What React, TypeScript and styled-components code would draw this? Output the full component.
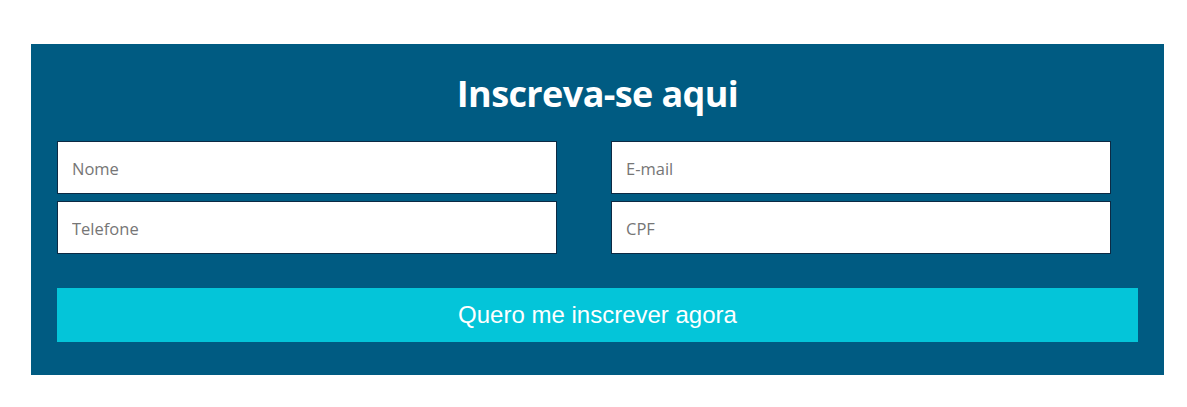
import React from "react";
import styled, { createGlobalStyle } from "styled-components";

const Global = createGlobalStyle`
  html, body { margin: 0; padding: 0; background: #ffffff; }
  body { font-family: "Noto Sans", sans-serif; }
`;

const Page = styled.div`
  padding: 44px 23px 0 31px;
`;

const Panel = styled.section`
  background: #005b82;
  height: 331px;
  box-sizing: border-box;
  padding: 0 26px 0 26px;
  display: flex;
  flex-direction: column;
`;

const Title = styled.h2`
  margin: 0;
  height: 97px;
  display: flex;
  align-items: center;
  justify-content: center;
  padding-top: 2px;
  box-sizing: border-box;
  color: #ffffff;
  font-family: "Open Sans", sans-serif;
  font-weight: 700;
  font-size: 36px;
  letter-spacing: -0.6px;
`;

const Fields = styled.div`
  display: grid;
  grid-template-columns: 500px 500px;
  column-gap: 54px;
  row-gap: 7px;
`;

const Input = styled.input`
  box-sizing: border-box;
  width: 500px;
  height: 53px;
  border: 1px solid #0c2a44;
  background: #ffffff;
  padding: 2px 14px 0;
  font-family: "Open Sans", sans-serif;
  font-size: 16.5px;
  color: #333;
  outline: none;
  &::placeholder { color: #767676; }
`;

const Button = styled.button`
  margin-top: 34px;
  height: 54px;
  border: none;
  background: #04c5d9;
  color: #ffffff;
  font-family: "Liberation Sans", Arial, sans-serif;
  font-size: 24px;
  cursor: pointer;
`;

export default function App() {
  return (
    <>
      <Global />
      <Page>
        <Panel>
          <Title>Inscreva-se aqui</Title>
          <Fields>
            <Input placeholder="Nome" />
            <Input placeholder="E-mail" />
            <Input placeholder="Telefone" />
            <Input placeholder="CPF" />
          </Fields>
          <Button>Quero me inscrever agora</Button>
        </Panel>
      </Page>
    </>
  );
}
